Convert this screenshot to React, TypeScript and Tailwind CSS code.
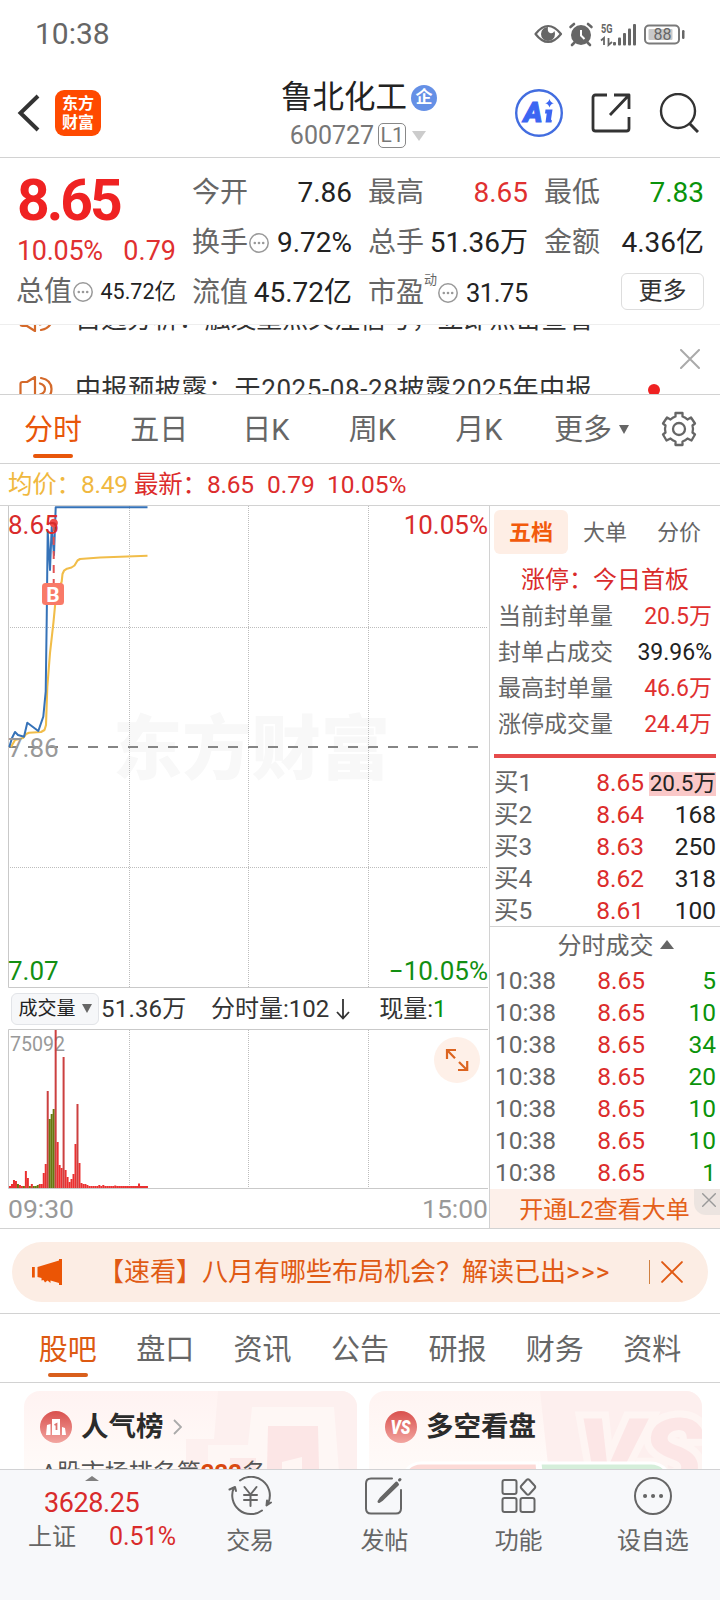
import type { ReactNode } from "react";
import { clsx } from "clsx";

const PERIOD_TABS = ["五日", "日K", "周K", "月K"];
const INFO_TABS = ["股吧", "盘口", "资讯", "公告", "研报", "财务", "资料"];

const LIMIT_STATS = [
  { label: "当前封单量", value: "20.5万", red: true },
  { label: "封单占成交", value: "39.96%", red: false },
  { label: "最高封单量", value: "46.6万", red: true },
  { label: "涨停成交量", value: "24.4万", red: true },
];

const BIDS = [
  { label: "买1", price: "8.65", volume: "20.5万", active: true },
  { label: "买2", price: "8.64", volume: "168" },
  { label: "买3", price: "8.63", volume: "250" },
  { label: "买4", price: "8.62", volume: "318" },
  { label: "买5", price: "8.61", volume: "100" },
];

const TRADES = ["5", "10", "34", "20", "10", "10", "1"];

// [height, falling?] per minute
const VOLUMES: [number, boolean?][] = [
  [2], [4], [8], [7], [4, true], [3], [2], [2, true], [17], [10],
  [2, true], [4], [2, true], [2, true], [3, true], [4], [4], [15], [24], [97],
  [69, true], [74, true], [79, true], [158], [46], [23], [20], [131], [18], [11],
  [6], [9], [14], [44], [84], [25], [5], [4], [4], [3],
  [2], [2], [2], [2], [2], [3], [2], [3], [2], [2],
  [2], [2], [2], [2.5], [2], [2], [2], [2], [2], [2],
  [2], [2], [2], [2], [2], [4.5], [2], [2], [2], [2],
];

function CrossIcon({ className, width = 2 }: { className?: string; width?: number }) {
  return (
    <svg viewBox="0 0 20 20" className={className} fill="none" stroke="currentColor" strokeWidth={width} strokeLinecap="round">
      <path d="M1 1L19 19M19 1L1 19" />
    </svg>
  );
}

function HintIcon() {
  return (
    <svg viewBox="0 0 20 20" className="ml-px h-5 w-5 shrink-0 text-[#999]" fill="currentColor">
      <circle cx="10" cy="10" r="9.2" fill="none" stroke="currentColor" strokeWidth="1.5" />
      <circle cx="5.8" cy="10" r="1.3" />
      <circle cx="10" cy="10" r="1.3" />
      <circle cx="14.2" cy="10" r="1.3" />
    </svg>
  );
}

function SpeakerIcon() {
  return (
    <svg viewBox="0 0 34 26" className="h-[26px] w-[34px]" fill="none" stroke="#d4692a" strokeWidth="2.2" strokeLinejoin="round" strokeLinecap="round">
      <path d="M1.5 8Q1.5 6 3.5 6H8L16 1V25L8 20H3.5Q1.5 20 1.5 18Z" />
      <path d="M21 7.5Q26 9 26 13T21 18.5" />
      <path d="M22 2Q32.5 4 32.5 13T22 24" />
    </svg>
  );
}

function StatusBar() {
  return (
    <div className="flex h-[68px] items-center justify-between pl-[35px] pr-[34px] text-[#666]">
      <span className="text-[30px] leading-none">10:38</span>
      <svg viewBox="0 0 152 26" className="h-[26px] w-[152px]" fill="#666">
        <path d="M1.5 13Q14-3 27 13Q14 29 1.5 13Z" fill="none" stroke="#666" strokeWidth="2.2" strokeLinejoin="round" />
        <path d="M14 6A7 7 0 1 0 21 13Q21 11.5 20.3 10Q19 13 16 12T14 6Z" />
        <circle cx="47" cy="14" r="10" />
        <path d="M47 9V14.5L50.5 18" stroke="#fff" strokeWidth="2" fill="none" />
        <path d="M36.5 6L40 3M57.5 6L54 3M40.5 21.5L38 24M53.5 21.5L56 24" stroke="#666" strokeWidth="2.6" strokeLinecap="round" />
        <text x="67" y="11.5" fontSize="13" fontWeight="700" textLength="11.5" lengthAdjust="spacingAndGlyphs">5G</text>
        <path d="M70 24V17L67 19.5M74.5 17V24L78 21" fill="none" stroke="#666" strokeWidth="1.8" />
        <rect x="79" y="21" width="3" height="3.5" rx="1" />
        <rect x="84" y="16.5" width="3" height="8" rx="1" />
        <rect x="89" y="12" width="3" height="12.5" rx="1" />
        <rect x="94" y="7.5" width="3" height="17" rx="1" />
        <rect x="99" y="3" width="3" height="21.5" rx="1" />
        <rect x="111" y="4.5" width="34" height="18" rx="4" fill="none" stroke="#7a7a7a" strokeWidth="2" />
        <rect x="114.5" y="8" width="24" height="11" rx="1" fill="#c9c9c9" />
        <rect x="148" y="9" width="2.5" height="9" rx="1.2" />
        <text x="128.5" y="19" fontSize="16" textAnchor="middle">88</text>
      </svg>
    </div>
  );
}

function Header() {
  return (
    <header className="grid h-[90px] grid-cols-[1fr_auto_1fr] items-center border-b border-[#d2d2d2] pl-[17px] pr-[21px]">
      <div className="flex items-center gap-[14px]">
        <svg viewBox="0 0 24 38" className="h-[38px] w-6" fill="none" stroke="#333" strokeWidth="4">
          <path d="M21 2L3.5 19L21 36" />
        </svg>
        <div className="flex h-[46px] w-[46px] flex-col items-center justify-center rounded-[9px] bg-[#ff4a00] text-[16px] font-bold leading-[19px] text-white">
          <span>东方</span>
          <span>财富</span>
        </div>
      </div>

      <div className="flex flex-col items-center pl-[2px] pt-[6px]">
        <div className="flex h-[40px] items-center gap-[4px]">
          <span className="text-[31.500px] leading-none text-[#222]">鲁北化工</span>
          <span className="flex h-[26px] w-[26px] items-center justify-center rounded-full bg-[#6590e6] text-[17px] font-bold leading-none text-white">
            企
          </span>
        </div>
        <div className="-ml-[2px] flex h-9 items-center gap-1 text-[25px] leading-none text-[#777]">
          600727
          <span className="flex h-[25px] w-7 items-center justify-center rounded-[5px] border border-[#888] text-[21px] leading-none">
            L1
          </span>
          <svg viewBox="0 0 14 10" className="ml-[2px] h-[10px] w-[14px]" fill="#ccc">
            <path d="M0 0H14L7 10Z" />
          </svg>
        </div>
      </div>

      <div className="flex items-center justify-end gap-7">
        <svg viewBox="0 0 48 48" className="h-12 w-12">
          <circle cx="24" cy="24" r="22.8" fill="none" stroke="#426de0" strokeWidth="2.4" />
          <text x="8.5" y="33" fontSize="28" fontWeight="900" fontStyle="italic" fill="#3c66f2" stroke="#3c66f2" textLength="19" lengthAdjust="spacingAndGlyphs">A</text>
          <path d="M30.5 20.5H37.5L36 30.5Q37.5 31 36.5 33.5H30.5L31.7 24.5H30Z" fill="#3c66f2" />
          <path d="M34.5 10Q35.3 13.4 38.8 14.2Q35.3 15 34.5 18.4Q33.7 15 30.2 14.2Q33.7 13.4 34.5 10Z" fill="#3c66f2" />
        </svg>
        <svg viewBox="0 0 40 40" className="h-10 w-10" fill="none" stroke="#333" strokeWidth="2.8">
          <path d="M16 2H4.5Q2 2 2 4.5V35.5Q2 38 4.5 38H35.5Q38 38 38 35.5V24M23 2H38V16M38 2L19 22" strokeLinejoin="round" />
        </svg>
        <svg viewBox="0 0 40 40" className="h-10 w-10" fill="none" stroke="#333" strokeWidth="2.4">
          <circle cx="19" cy="18" r="17" />
          <path d="M30.5 30.5L39 39" strokeWidth="3" />
        </svg>
      </div>
    </header>
  );
}

function Stat({ label, children, color = "text-[#222]" }: { label: ReactNode; children: ReactNode; color?: string }) {
  return (
    <div className="flex h-[50px] items-center justify-between">
      <span className="flex items-center text-[#666]">{label}</span>
      <span className={color}>{children}</span>
    </div>
  );
}

function Quote() {
  return (
    <section className="flex h-[167px] gap-4 border-b border-[#eee] pl-[17px] pr-4 pt-[10px] text-[28px] leading-none">
      <div className="w-[159px] shrink-0">
        <div className="flex h-[65px] items-center text-[57px] font-bold tracking-[-3px] text-[#ef2222]">8.65</div>
        <div className="flex h-[37px] items-center justify-between text-[27px] text-[#e03030]">
          <span className="tracking-[-0.3px]">10.05%</span>
          <span>0.79</span>
        </div>
        <div className="-ml-px flex h-[44px] items-center justify-between">
          <span className="flex items-center text-[#666]">
            总值
            <HintIcon />
          </span>
          <span className="text-[21.500px] text-[#222]">45.72亿</span>
        </div>
      </div>

      <div className="grid flex-1 grid-cols-3 content-start gap-x-4">
        <Stat label="今开">7.86</Stat>
        <Stat label="最高" color="text-[#e03030]">8.65</Stat>
        <Stat label="最低" color="text-[#0a930a]">7.83</Stat>
        <Stat label={<>换手<HintIcon /></>}>9.72%</Stat>
        <Stat label="总手">51.36万</Stat>
        <Stat label="金额">4.36亿</Stat>
        <Stat label="流值">45.72亿</Stat>
        <Stat
          label={
            <>
              市盈
              <span className="-mt-7 text-[13px]">动</span>
              <HintIcon />
            </>
          }
        >
          <span className="text-[25.500px] tracking-[-0.400px]">31.75</span>
        </Stat>
        <div className="flex h-[47px] items-center justify-end">
          <button className="h-[37px] w-[83px] rounded-md border border-[#ddd] pb-[2px] text-[24px] leading-none text-[#333]">
            更多
          </button>
        </div>
      </div>
    </section>
  );
}

function Ticker() {
  return (
    <section className="relative h-[70px] overflow-hidden border-b border-[#d2d2d2] text-[26px] leading-none text-[#333]">
      <div className="-mt-[41px] pl-[19px]">
        <div className="flex h-[70px] items-center gap-[22px]">
          <SpeakerIcon />
          <span className="whitespace-nowrap tracking-[-0.100px]">自选分析：触发重点关注信号，立即点击查看</span>
        </div>
        <div className="flex h-[70px] items-center gap-[22px]">
          <SpeakerIcon />
          <span className="whitespace-nowrap tracking-[0.600px]">中报预披露：于2025-08-28披露2025年中报</span>
        </div>
      </div>
      <CrossIcon className="absolute right-[20px] top-[24px] h-5 w-5 text-[#aaa]" />
      <span className="absolute right-[60px] top-[59px] h-3 w-3 rounded-full bg-[#ef2222]" />
    </section>
  );
}

function PeriodTabs() {
  return (
    <nav className="flex h-[69px] items-center border-b border-[#d2d2d2] text-[29px] leading-none text-[#666]">
      <div className="flex h-full w-[106px] flex-col items-center justify-between pb-[5px] text-[#e8560a]">
        <span className="pt-[21px]">分时</span>
        <span className="h-1 w-10 rounded-full bg-[#e8560a]" />
      </div>
      {PERIOD_TABS.map((tab) => (
        <span key={tab} className="w-[106.500px] pt-[2px] text-center">
          {tab}
        </span>
      ))}
      <span className="ml-[22px] pt-[2px]">更多</span>
      <svg viewBox="0 0 10 9" className="ml-[7px] h-[9px] w-[10px]" fill="#666">
        <path d="M0 0H10L5 9Z" />
      </svg>
      <svg viewBox="0 0 36 36" className="ml-[32px] h-9 w-9" fill="none" stroke="#666" strokeWidth="2.3" strokeLinejoin="round">
        <path d="M14.5 2H21.5V5.5Q24.5 6.5 26.5 8.5L30 6.5L34 12.5L31.5 14.5Q32.5 18 31.5 21.5L34 23.5L30.5 29.5L26.5 27.5Q24.5 29.5 21.5 30.5V34H14.5V30.5Q11.5 29.5 9.5 27.5L5.5 29.5L2 23.5L4.5 21.5Q3.5 18 4.5 14.5L2 12.5L6 6.5L9.5 8.5Q11.5 6.5 14.5 5.5Z" />
        <circle cx="18" cy="18" r="6" />
      </svg>
    </nav>
  );
}

function Legend() {
  return (
    <div className="flex h-[42px] items-center border-b border-[#d2d2d2] pl-[8px] pt-px text-[24.500px] leading-none text-[#dc2c2c]">
      <span className="w-[126px] whitespace-nowrap tracking-[-0.200px] text-[#f0b840]">均价：8.49</span>
      <span className="w-[133px] whitespace-nowrap tracking-[-0.200px]">最新：8.65</span>
      <span className="w-[60px]">0.79</span>
      <span>10.05%</span>
    </div>
  );
}

// Plot is 481 wide; the vertical grid marks each trading hour.
function PriceChart() {
  return (
    <svg viewBox="8 506 481 482" className="block h-[482px] w-[481px]" fontSize="26">
      <text x="113" y="774" fontSize="70" fontWeight="900" fill="#f8f8f8" textLength="277" lengthAdjust="spacingAndGlyphs">东方财富</text>
      <path d="M129.5 506V987M248.5 506V987M368.5 506V987M10 627.5H487M10 867.5H487" stroke="#bdbdbd" strokeDasharray="1 1" fill="none" />
      <path d="M8 747H480" stroke="#858585" strokeWidth="1.8" strokeDasharray="10 10" />
      <path d="M8.5 506V987.5H488" stroke="#c9c9c9" fill="none" />
      <path
        d="M11 747L15 740L23 738L26 734L29 732.7L41 732L44.5 730L46 725L47.3 687L50 653L53.5 622L55.3 603L57.5 590L61.7 581.7L62.5 574L64 570.7L67 568.7L71.5 567.5L74.5 565.5L77.5 560.5L80 559L100 557.5L147.5 555.8"
        fill="none" stroke="#f1bd49" strokeWidth="2.1" strokeLinejoin="round"
      />
      <path
        d="M9.3 747L12 738L15 732L18 735L24 736.7L27.3 722.7L38.3 731L43.3 716.7L45.7 691.7L46.7 620L47.7 531L50 570L51.7 527L54 555L55.7 507.2H147.5"
        fill="none" stroke="#3572b8" strokeWidth="2" strokeLinejoin="round"
      />
      <path d="M53.7 523V583" stroke="#e25454" strokeWidth="2" strokeDasharray="8 6" />
      <circle cx="53.7" cy="523" r="4.2" fill="#ef4a4a" />
      <rect x="42" y="583" width="22" height="22" rx="3.5" fill="#f97a68" />
      <text x="53" y="601.5" fontSize="21" fontWeight="700" fill="#fff" textAnchor="middle">B</text>
      <text x="8" y="534" fill="#d92b2b">8.65</text>
      <text x="488" y="534" fill="#d92b2b" textAnchor="end">10.05%</text>
      <text x="8" y="757" fill="#999">7.86</text>
      <text x="8" y="980" fill="#128f12">7.07</text>
      <text x="488" y="980" fill="#128f12" textAnchor="end">−10.05%</text>
    </svg>
  );
}

function VolumeChart() {
  return (
    <svg viewBox="8 1029 481 160" className="block h-[160px] w-[481px]">
      <path d="M129.5 1030V1188M248.5 1030V1188M368.5 1030V1188" stroke="#bdbdbd" strokeDasharray="1 1" />
      <text x="10" y="1050.5" fontSize="20" fill="#999" textLength="55" lengthAdjust="spacingAndGlyphs">75092</text>
      {VOLUMES.map(([h, falling], i) => (
        <rect
          key={i}
          x={9 + i * 1.985}
          y={1188 - h}
          width={2}
          height={h}
          fill={falling ? "#66780f" : h > 80 ? "#cc4040" : "#ea3030"}
        />
      ))}
      <path d="M488 1029.5H8.5V1188.5H488" stroke="#c9c9c9" fill="none" />
      <circle cx="457" cy="1060" r="23" fill="#fef0e8" />
      <path d="M447 1059V1050H456M447 1050L455 1058.3M467.2 1061V1070H458M467 1070L459 1062" fill="none" stroke="#dc6420" strokeWidth="2.2" />
    </svg>
  );
}

function ChartColumn() {
  return (
    <div className="flex w-[490px] shrink-0 flex-col border-r border-[#d2d2d2] pl-2">
      <PriceChart />
      <div className="flex h-[41px] items-center text-[24px] leading-none text-[#333]">
        <button className="ml-[3px] flex h-[32px] w-[88px] shrink-0 items-center justify-center gap-[6px] rounded-md border border-[#e2e4e8] bg-[#f6f7f9] text-[19px] leading-none text-[#222]">
          成交量
          <svg viewBox="0 0 10 9" className="h-[9px] w-[10px]" fill="#666">
            <path d="M0 0H10L5 9Z" />
          </svg>
        </button>
        <span className="ml-[2px] w-[110px] whitespace-nowrap tracking-[0.200px]">51.36万</span>
        <span className="whitespace-nowrap">分时量:102</span>
        <svg viewBox="0 0 14 22" className="ml-[7px] h-[22px] w-[14px]" fill="none" stroke="#333" strokeWidth="1.8">
          <path d="M7 1V20M1 14L7 20.5L13 14" />
        </svg>
        <span className="ml-[29px] whitespace-nowrap">
          现量:<span className="text-[#0a930a]">1</span>
        </span>
      </div>
      <VolumeChart />
      <div className="flex h-[39px] items-center justify-between pr-px pt-px text-[26.500px] leading-none text-[#999]">
        <span>09:30</span>
        <span>15:00</span>
      </div>
    </div>
  );
}

function OrderBook() {
  return (
    <div className="flex flex-1 flex-col leading-none">
      <div className="flex items-center pl-1 pt-1 text-[22px] text-[#666]">
        <span className="flex h-11 w-[74px] items-center justify-center rounded-md bg-[#feeee5] pt-px font-bold text-[#f25a0c]">
          五档
        </span>
        <span className="w-[74px] pt-[2px] text-center">大单</span>
        <span className="w-[74px] pt-[2px] text-center">分价</span>
      </div>
      <div className="flex h-[44px] items-center justify-center pt-[8px] text-[24px] text-[#d92b2b]">涨停：今日首板</div>
      <div className="pl-[8px] pr-[8px] text-[23px]">
        {LIMIT_STATS.map((item) => (
          <div key={item.label} className="flex h-9 items-center justify-between text-[#666]">
            {item.label}
            <span className={item.red ? "text-[#e03030]" : "text-[#222]"}>{item.value}</span>
          </div>
        ))}
      </div>
      <div className="ml-1 mr-1 mt-[12px] h-1 bg-[#e64b4b]" />

      <div className="mt-[8px] border-b border-[#d2d2d2] pl-[4px] pr-1 text-[24.500px]">
        {BIDS.map((bid) => (
          <div key={bid.label} className="flex h-8 items-center pt-[3px] text-[#666]">
            <span className="w-[70px]">{bid.label}</span>
            <span className="w-[80px] text-right text-[#dc2c2c]">{bid.price}</span>
            <span className="flex flex-1 justify-end text-[#222]">
              <span
                className={clsx(
                  bid.active && "flex h-6 w-[67px] items-center justify-end whitespace-nowrap bg-[#fac8c8] text-[22.500px]",
                )}
              >
                {bid.volume}
              </span>
            </span>
          </div>
        ))}
      </div>

      <div className="flex h-[37px] items-center justify-center gap-[6px] pl-[21px] text-[24px] text-[#666]">
        分时成交
        <svg viewBox="0 0 14 9" className="-mt-[3px] h-[9px] w-[14px]" fill="#666">
          <path d="M0 9H14L7 0Z" />
        </svg>
      </div>
      <div className="pl-[5px] pr-1 text-[24.500px]">
        {TRADES.map((volume, i) => (
          <div key={i} className="flex h-8 items-center pt-[3px] text-[#666]">
            <span className="w-[70px]">10:38</span>
            <span className="w-[80px] text-right text-[#dc2c2c]">8.65</span>
            <span className="flex-1 text-right text-[#0a930a]">{volume}</span>
          </div>
        ))}
      </div>

      <div className="relative mt-auto flex h-[39px] items-center justify-center overflow-hidden bg-[#fdf0ea] pr-px pt-[2px] text-[24px] text-[#e4601a]">
        开通L2查看大单
        <span className="absolute right-0 top-0 flex h-[26px] w-[26px] items-center justify-center rounded-bl-xl bg-[#ece4e0]">
          <CrossIcon className="-mt-[4px] ml-[4px] h-[14px] w-[14px] text-[#999]" />
        </span>
      </div>
    </div>
  );
}

function Promo() {
  return (
    <section className="h-[85px] border-b border-[#d2d2d2] px-3 pt-[13px]">
      <div className="flex h-[60px] items-center rounded-full bg-[#fcede4] pl-[20px] pr-[25px] text-[26px] leading-none text-[#e05a14]">
        <svg viewBox="0 0 30 26" className="h-[26px] w-[30px]" fill="#eb5505">
          <path d="M0 8H2.8V18.5H0ZM5.5 8L27 1.5V0H30V26H27V24L18.5 21.5V24L15.5 21.5L13 23.5L11.5 21L9.5 21.5V19L5.5 18Z" />
        </svg>
        <span className="ml-[36px] whitespace-nowrap">
          【速看】八月有哪些布局机会？解读已出<span className="tracking-[1.300px]">&gt;&gt;&gt;</span>
        </span>
        <span className="ml-auto h-6 w-px bg-[#d08040]" />
        <CrossIcon className="ml-[11px] h-[22px] w-[22px]" width={1.8} />
      </div>
    </section>
  );
}

function InfoTabs() {
  return (
    <nav className="flex h-[69px] border-b border-[#d2d2d2] px-[19px] text-[29px] leading-none text-[#666]">
      {INFO_TABS.map((tab, i) => (
        <div
          key={tab}
          className={clsx("flex flex-1 flex-col items-center justify-between pb-[5px] pt-[22px]", i === 0 && "text-[#dd5a12]")}
        >
          {tab}
          {i === 0 && <span className="h-1 w-10 rounded-full bg-[#d95f1c]" />}
        </div>
      ))}
    </nav>
  );
}

function Cards() {
  return (
    <section className="flex h-[86px] gap-3 overflow-hidden pl-6 pr-[18px] pt-2">
      <div className="relative h-[120px] flex-1 overflow-hidden rounded-2xl bg-gradient-to-b from-[#fff3f2] to-[#fffaf8] to-60%">
        <svg viewBox="0 0 333 120" className="absolute inset-0 h-full w-full">
          <path d="M194 0H333V120H162V48H190Z" fill="#fdf0ef" />
          <path d="M228 16H310L318 120H184V54H224Z" fill="#fef7f5" />
          <path d="M244 35H294L296 120H242Z" fill="#fce6e6" />
          <path d="M206 67H232V120H204Z" fill="#fce9e8" />
          <path d="M258 71L278 66V120H258Z" fill="#fff6f4" />
        </svg>
        <div className="relative flex items-center pl-4 pt-[20px]">
          <svg viewBox="0 0 32 32" className="h-8 w-8">
            <defs>
              <linearGradient id="badge" x1="0" y1="0" x2="0" y2="1">
                <stop offset="0" stopColor="#d9504d" />
                <stop offset="1" stopColor="#f2a5a0" />
              </linearGradient>
            </defs>
            <circle cx="16" cy="16" r="16" fill="url(#badge)" />
            <path d="M12 8H20V24H12ZM7 14L10.5 13V24H6ZM22 16L25 17L26 24H22Z" fill="#fff" />
            <path d="M14.5 14L16.5 13V19" fill="none" stroke="#dd7470" strokeWidth="1.8" />
          </svg>
          <span className="ml-[9px] text-[27.500px] font-bold leading-none text-[#2b2b2b]">人气榜</span>
          <svg viewBox="0 0 9 16" className="ml-[9px] h-4 w-[9px]" fill="none" stroke="#aaa" strokeWidth="1.8">
            <path d="M1 1L8 8L1 15" />
          </svg>
        </div>
        <div className="relative ml-[17px] mt-[18px] text-[24px] leading-none text-[#555]">
          A股市场排名第<span className="font-bold text-[#d9480f]">222</span>名
        </div>
      </div>

      <div className="relative h-[120px] flex-1 overflow-hidden rounded-2xl bg-gradient-to-b from-[#fff4f2] to-[#fffaf8] to-60%">
        <svg viewBox="0 0 333 120" className="absolute inset-0 h-full w-full">
          <path d="M171 0H333V120H184Z" fill="#fdefee" />
          <text x="208" y="96" fontSize="96" fontWeight="900" fontStyle="italic" fill="#fce6e6" stroke="#fef5f3" strokeWidth="14" paintOrder="stroke" textLength="126" lengthAdjust="spacingAndGlyphs">VS</text>
          <path d="M30 120Q28 72 52 72H168L172 120Z" fill="#fcdad7" stroke="#fff" strokeWidth="3" />
          <path d="M171 72H282Q306 72 306 120H176Z" fill="#d5eeda" stroke="#fff" strokeWidth="3" />
        </svg>
        <div className="relative flex items-center pl-4 pt-[20px]">
          <svg viewBox="0 0 32 32" className="h-8 w-8">
            <circle cx="16" cy="16" r="16" fill="url(#badge)" />
            <text x="15.5" y="23" fontSize="20" fontWeight="900" fontStyle="italic" fill="#fff" textAnchor="middle" textLength="20" lengthAdjust="spacingAndGlyphs">VS</text>
          </svg>
          <span className="ml-[9px] text-[27.500px] font-bold leading-none text-[#2b2b2b]">多空看盘</span>
        </div>
      </div>
    </section>
  );
}

function NavItem({ label, children }: { label: string; children: ReactNode }) {
  return (
    <div className="flex flex-1 flex-col items-center">
      <svg viewBox="0 0 44 40" className="mt-[6px] h-10 w-11" fill="none" stroke="#666" strokeWidth="2" strokeLinecap="round" strokeLinejoin="round">
        {children}
      </svg>
      <span className="mt-[13px] text-[24px] leading-none text-[#666]">{label}</span>
    </div>
  );
}

function BottomNav() {
  return (
    <footer className="flex h-[131px] border-t border-[#d2d2d4] bg-[#f7f8fa] leading-none">
      <div className="relative w-[183px] shrink-0 text-[#d92b2b]">
        <svg viewBox="0 0 14 5" className="absolute left-[85px] top-[6px] h-[5px] w-[14px]" fill="#808080">
          <path d="M0 5H14L7 0Z" />
        </svg>
        <div className="pl-[44px] pt-[20px] text-[27px] tracking-[-0.400px]">3628.25</div>
        <div className="mt-[7px] flex items-center justify-between pl-[28px] pr-[7px]">
          <span className="text-[24px] text-[#666]">上证</span>
          <span className="text-[25px]">0.51%</span>
        </div>
      </div>
      <NavItem label="交易">
        <path d="M12 4.5A18.7 18.7 0 0 1 40.5 26.5M34 34.5A18.7 18.7 0 0 1 6 11.5M1.5 13.5L7 11L8 15M43 26.5L38.5 29.5L39 24.5" />
        <path d="M16.5 11L22.5 18.5L28.5 11M22.5 18.5V30M16 19H29M16 24H29" />
      </NavItem>
      <NavItem label="发帖">
        <path d="M30 2.5H9Q4 2.5 4 7.5V32.5Q4 37.5 9 37.5H34Q39 37.5 39 32.5V14" />
        <path d="M34.5 7L19 22.5L17 25.5L20 23.5L35.5 8.5ZM37.5 4L38 3.5" strokeWidth="3" />
      </NavItem>
      <NavItem label="功能">
        <rect x="5.5" y="4" width="14" height="14" rx="2" />
        <rect x="5.5" y="22" width="14" height="14" rx="2" />
        <rect x="23.5" y="22" width="14" height="14" rx="2" />
        <path d="M29.5 4Q31 2.5 32.5 4L37.5 9.5Q39 11 37.5 12.5L32.5 18Q31 19.5 29.5 18L24.5 12.5Q23 11 24.5 9.5Z" />
      </NavItem>
      <NavItem label="设自选">
        <circle cx="22" cy="20" r="18" />
        <path d="M14 20H14.1M22 20H22.1M30 20H30.1" strokeWidth="4" />
      </NavItem>
    </footer>
  );
}

export default function App() {
  return (
    <div className="h-[1600px] w-[720px] overflow-hidden bg-white font-['Roboto','Noto_Sans_CJK_SC',sans-serif]">
      <StatusBar />
      <Header />
      <Quote />
      <Ticker />
      <PeriodTabs />
      <Legend />
      <section className="flex h-[723px] border-b border-[#d2d2d2]">
        <ChartColumn />
        <OrderBook />
      </section>
      <Promo />
      <InfoTabs />
      <Cards />
      <BottomNav />
    </div>
  );
}
